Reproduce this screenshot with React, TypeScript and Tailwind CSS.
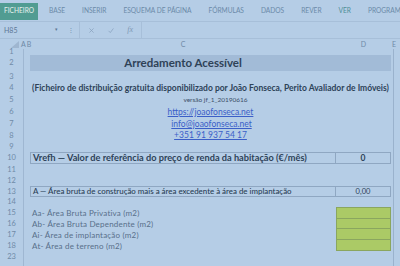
import React from 'react';

const tabs = ['BASE', 'INSERIR', 'ESQUEMA DE PÁGINA', 'FÓRMULAS', 'DADOS', 'REVER', 'VER', 'PROGRAMADOR'];

type RowProps = {
  n?: number;
  h: string;
  children?: React.ReactNode;
  d?: React.ReactNode;
  dClass?: string;
  cClass?: string;
};

function Row({ n, h, children, d, dClass = '', cClass = '' }: RowProps) {
  return (
    <div className={`flex ${h}`}>
      <div className="flex w-[24px] shrink-0 items-center justify-center border-r border-[#9fb7d2] text-[7.5px] text-[#6f8aa6]">
        {n}
      </div>
      <div className="w-[6px] shrink-0" />
      <div className={`flex w-[306px] shrink-0 items-center ${cClass}`}>{children}</div>
      <div className={`flex w-[55px] shrink-0 items-center justify-center ${dClass}`}>{d}</div>
      <div className="w-[2px] shrink-0" />
      <div className="flex-1 border-l border-[#9ab2cd]" />
    </div>
  );
}

export default function App() {
  return (
    <div
      className="h-[266px] w-[400px] overflow-hidden bg-[#b5cde6] text-[#2d4258]"
      style={{ fontFamily: 'Lato, "Liberation Sans", sans-serif' }}
    >
      {/* ribbon tabs */}
      <div className="flex h-[21px] items-center gap-[17px] overflow-hidden whitespace-nowrap pt-[1px] text-[6.6px] text-[#6b8aa8]">
        <div className="flex h-[17px] w-[38px] shrink-0 items-center justify-center bg-[#519c92] text-[6.6px] text-[#e6f1ee]">
          FICHEIRO
        </div>
        {tabs.map((t, i) => (
          <span key={t} className={i === 0 ? '-ml-[6px]' : t === 'VER' ? 'text-[#4f8f96]' : ''}>
            {t}
          </span>
        ))}
      </div>

      {/* formula bar */}
      <div className="flex h-[18px] items-stretch border-y border-[#a7bfd9] text-[#6b8aa8]">
        <div className="flex w-[62px] items-center justify-between pl-[4px] pr-[4px] text-[7px] text-[#5d7896]">
          <span>H85</span>
          <span className="text-[5px]">▾</span>
        </div>
        <div className="flex w-[17px] items-center justify-center text-[7px]">⁝</div>
        <div className="flex w-[63px] items-center justify-around border-x border-[#a7bfd9] px-[2px]">
          <svg width="7" height="7" viewBox="0 0 10 10">
            <path d="M2 2 L8 8 M8 2 L2 8" stroke="#8aa3bf" strokeWidth="1.1" fill="none" />
          </svg>
          <svg width="8" height="7" viewBox="0 0 10 10">
            <path d="M1.5 5.5 L4 8 L8.5 2" stroke="#8aa3bf" strokeWidth="1.1" fill="none" />
          </svg>
          <span className="text-[8px] italic text-[#7f98b5]" style={{ fontFamily: '"Liberation Serif", serif' }}>
            fx
          </span>
        </div>
        <div className="flex-1" />
      </div>

      {/* column headers */}
      <div className="flex h-[10px] items-center text-[7px] text-[#6f8aa6]">
        <div className="flex w-[24px] shrink-0 items-end justify-end pr-[5px]">
          <svg width="8" height="7" viewBox="0 0 8 7">
            <path d="M8 0 L8 7 L0 7 Z" fill="#9fb6d0" />
          </svg>
        </div>
        <div className="-ml-[3px] w-[9px] shrink-0 tracking-[1px]">AB</div>
        <div className="w-[306px] shrink-0 text-center">C</div>
        <div className="w-[55px] shrink-0 text-center">D</div>
        <div className="flex-1 pl-[1px]">E</div>
      </div>

      <Row n={1} h="h-[6px]" />
      <Row
        n={2}
        h="h-[16px]"
        cClass="justify-center bg-[#a2bbd7] text-[11.5px] font-bold text-[#2f4257]"
        dClass="bg-[#a2bbd7]"
      >
        Arredamento Acessível
      </Row>
      <Row n={3} h="h-[11px]" />
      <Row n={4} h="h-[12px]">
        <div className="w-[361px] shrink-0 whitespace-nowrap text-center text-[8.5px] font-bold">
          (Ficheiro de distribuição gratuita disponibilizado por João Fonseca, Perito Avaliador de Imóveis)
        </div>
      </Row>
      <Row n={5} h="h-[12px]">
        <div className="w-[361px] shrink-0 pl-[10px] text-center text-[6.5px] text-[#3c5068]">versão jf_1_20190616</div>
      </Row>
      <Row n={6} h="h-[12px]">
        <div className="w-[361px] shrink-0 text-center text-[8.5px] text-[#3b5fc8] underline">https://joaofonseca.net</div>
      </Row>
      <Row n={7} h="h-[12px]">
        <div className="w-[361px] shrink-0 pl-[2px] text-center text-[8.5px] text-[#3b5fc8] underline">
          info@joaofonseca.net
        </div>
      </Row>
      <Row n={8} h="h-[11px]">
        <div className="w-[361px] shrink-0 text-center text-[8.5px] text-[#3b5fc8] underline">+351 91 937 54 17</div>
      </Row>
      <Row n={9} h="h-[11px]" />
      <Row
        n={10}
        h="h-[12px]"
        cClass="border border-[#8fa7c2] pl-[2px] text-[9.2px] font-bold whitespace-nowrap"
        dClass="border border-l-0 border-[#8fa7c2] text-[8.5px] font-bold"
        d="0"
      >
        Vrefh — Valor de referência do preço de renda da habitação (€/mês)
      </Row>
      <Row n={11} h="h-[11px]" />
      <Row n={12} h="h-[11px]" />
      <Row
        n={13}
        h="h-[11px]"
        cClass="border border-[#8fa7c2] pl-[2px] text-[7.9px] font-medium whitespace-nowrap text-[#2a3e55]"
        dClass="border border-l-0 border-[#8fa7c2] text-[7.5px]"
        d="0,00"
      >
        A — Área bruta de construção mais a área excedente à área de implantação
      </Row>
      <Row n={14} h="h-[10px]" />
      <Row
        n={15}
        h="h-[12px]"
        cClass="pl-[2px] text-[8px] tracking-[0.2px] text-[#586f8a]"
        dClass="border border-[#8aa65f] bg-[#abca66]"
      >
        Aa- Área Bruta Privativa (m2)
      </Row>
      <Row
        n={16}
        h="h-[10px]"
        cClass="pl-[2px] text-[8px] tracking-[0.2px] text-[#586f8a]"
        dClass="border border-t-0 border-[#8aa65f] bg-[#abca66]"
      >
        Ab- Área Bruta Dependente (m2)
      </Row>
      <Row
        n={17}
        h="h-[11px]"
        cClass="pl-[2px] text-[8px] tracking-[0.2px] text-[#586f8a]"
        dClass="border border-t-0 border-[#8aa65f] bg-[#abca66]"
      >
        Ai- Área de implantação (m2)
      </Row>
      <Row
        n={18}
        h="h-[11px]"
        cClass="pl-[2px] text-[8px] tracking-[0.2px] text-[#586f8a]"
        dClass="border border-t-0 border-[#8aa65f] bg-[#abca66]"
      >
        At- Área de terreno (m2)
      </Row>
      <Row n={23} h="h-[11px]" />
      <Row h="h-[11px]" />
    </div>
  );
}
